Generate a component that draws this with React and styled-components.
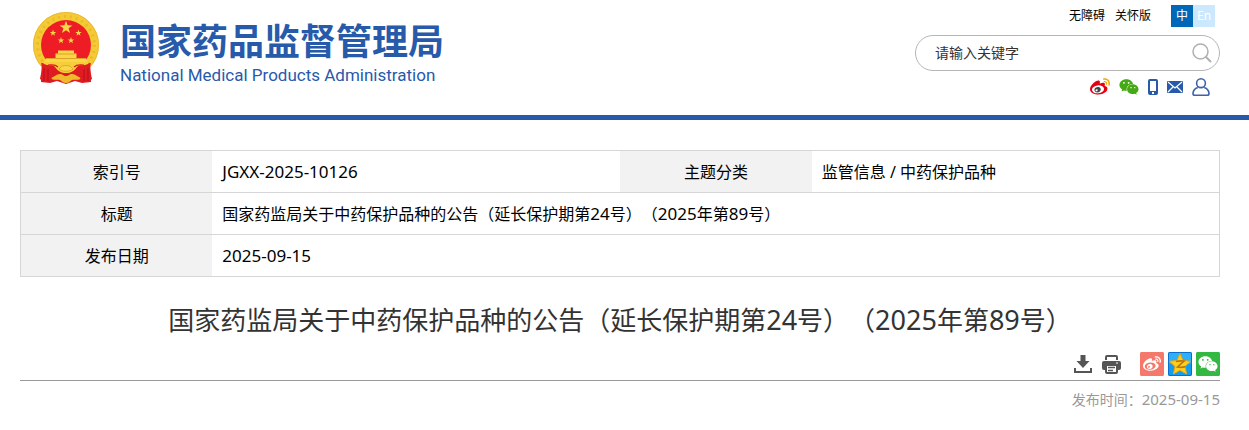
import React from "react";
import styled, { createGlobalStyle } from "styled-components";
import { FaWeixin } from "react-icons/fa";

const colors = {
  brand: "#285aaa",
  line: "#d6d6d6",
  label: "#f2f2f2",
  text: "#333333",
  muted: "#999999",
};

const star = (cx, cy, r) =>
  Array.from({ length: 10 }, (_, i) => {
    const radius = i % 2 ? r * 0.4 : r;
    const angle = (Math.PI / 5) * i - Math.PI / 2;
    return `${(cx + radius * Math.cos(angle)).toFixed(2)},${(
      cy +
      radius * Math.sin(angle)
    ).toFixed(2)}`;
  }).join(" ");

const Emblem = () => (
  <svg width="66" height="72" viewBox="0 0 66 72" aria-hidden="true">
    <circle cx="33" cy="33" r="33" fill="#f5cb35" />
    <circle
      cx="33"
      cy="33"
      r="28.5"
      fill="none"
      stroke="#e3a81f"
      strokeWidth="3"
      strokeDasharray="2 4"
      opacity="0.5"
    />
    <circle cx="33" cy="33" r="32.5" fill="none" stroke="#e9b93a" />
    <circle cx="33" cy="33" r="25" fill="#ee1c25" />
    <g fill="#f8d648">
      <polygon points={star(33, 15.5, 6.8)} />
      <polygon points={star(20, 21, 3.4)} />
      <polygon points={star(45.5, 21, 3.4)} />
      <polygon points={star(28, 28.5, 3.4)} />
      <polygon points={star(38, 28.5, 3.4)} />
      <path d="M25 38.5h16v3h2.5v4.5H53l2 4.5H11L13 46h9.5v-4.5H25z" />
    </g>
    <path d="M24 42h18M13 46.5h40" stroke="#dda226" />
    <path d="M9 51h48l1 19-9 1-7-2-9 3-9-3-7 2-9-1z" fill="#e01a22" />
    <path
      d="M11 50h44l1 3c-5 1-9-1-12 2-3 4-6 6-11 6s-8-2-11-6c-3-3-7-1-12-2z"
      fill="#f6ce39"
    />
    <path d="M15 53c5 0 7-1 10 2M51 53c-5 0-7-1-10 2" fill="none" stroke="#e01a22" strokeWidth="1.2" />
    <path
      d="M28 55c1-2 9-2 10 0l2 2c-2 3-12 3-14 0z"
      fill="#f8d648"
      stroke="#dc9c22"
      strokeWidth="0.8"
    />
    <path
      d="M17 66c5-1 6-4 10-4 3 0 3 2 6 2s3-2 6-2c4 0 5 3 10 4-4 3-7 1-10 2-2 1-3 3-6 3s-4-2-6-3c-3-1-6 1-10-2z"
      fill="#efb92c"
    />
    <path d="M8 51c2 5 0 10-1 16l4 3 7-1c2-5 1-11-1-15zM58 51c-2 5 0 10 1 16l-4 3-7-1c-2-5-1-11 1-15z" fill="#e21b23" />
    <path d="M11 56v13M15 57v12M51 57v12M55 56v13" stroke="#b01019" />
  </svg>
);

const WeiboIcon = ({ size, body, eye, wave }) => (
  <svg width={size} height={size} viewBox="0 0 512 512" aria-hidden="true">
    <path
      fill={body}
      d="M214.8 446.7C108.5 446.7 0 395.3 0 310.4c0-44.3 28-95.4 76.3-143.7C176 67 279.5 65.8 249.9 161c-4 13.1 12.3 5.7 12.3 6 79.5-33.6 140.5-16.8 114 51.4-3.7 9.4 1.1 10.9 8.3 13.1 135.7 42.3 34.8 215.2-169.7 215.2zm143.7-146.3c-5.4-55.7-78.5-94-163.4-85.7-84.8 8.6-148.8 60.3-143.4 116s78.5 94 163.4 85.7c84.8-8.6 148.8-60.3 143.4-116z"
    />
    <path
      fill={wave}
      d="M407 177.6c7.6-24-13.4-46.8-37.4-41.7-22 4.8-28.8-28.1-7.1-32.8 50.1-10.9 92.3 37.1 76.5 84.8-6.8 21.2-38.8 10.8-32-10.3zM347.9 35.1c-25.9 5.6-16.8 43.7 8.3 38.3 72.3-15.2 134.8 52.8 111.7 124-7.4 24.2 29.1 37 37.4 12 31.9-99.8-55.1-195.9-157.4-174.3z"
    />
    <path
      fill={eye}
      d="M269.4 346.1c-17.1 38.8-66.8 60-109.1 46.3-40.8-13.1-58-53.4-40.3-89.7 17.7-35.4 63.1-55.4 103.4-45.1 42 10.8 63.1 50.2 46 88.5zm-86.3-30c-12.9-5.4-30 .3-38 12.9-8.3 12.9-4.3 28 8.6 34 13.1 6 30.8.3 39.1-12.9 8-13.1 3.7-28.3-9.7-34z"
    />
  </svg>
);

const PhoneIcon = () => (
  <svg width="10" height="16" viewBox="0 0 10 16" aria-hidden="true">
    <rect width="10" height="16" rx="2" fill={colors.brand} />
    <rect x="2" y="2" width="6" height="10" fill="#fff" />
    <rect x="4" y="13" width="2" height="2" fill="#fff" />
  </svg>
);

const MailIcon = () => (
  <svg width="16" height="12" viewBox="0 0 16 12" aria-hidden="true">
    <rect width="16" height="12" rx="1" fill={colors.brand} />
    <path d="M1 1l7 6 7-6M1 11l5-5M15 11l-5-5" fill="none" stroke="#fff" strokeWidth="1.2" />
  </svg>
);

const UserIcon = () => (
  <svg width="18" height="18" viewBox="0 0 18 18" aria-hidden="true">
    <g fill="none" stroke="#3f60ad" strokeWidth="1.6">
      <circle cx="9" cy="5.2" r="4.4" />
      <path d="M5.8 9.4C3 10.3 1.2 12.6 1 15.4c0 1.2.6 1.8 1.8 1.8h12.4c1.2 0 1.8-.6 1.8-1.8-.2-2.8-2-5.1-4.8-6" />
    </g>
  </svg>
);

const SearchIcon = () => (
  <svg width="20" height="20" viewBox="0 0 20 20" aria-hidden="true">
    <g fill="none" stroke="#b0b0b0" strokeWidth="1.5">
      <circle cx="8.5" cy="8.5" r="7.5" />
      <path d="M13.5 13.5l5.5 5.5" strokeWidth="2" />
    </g>
  </svg>
);

const DownloadIcon = () => (
  <svg width="18" height="18" viewBox="0 0 18 18" aria-hidden="true">
    <path d="M6.5 0h5v6h4L9 13 2.5 6h4z" fill="#555" />
    <path d="M1 13v4h16v-4" fill="none" stroke="#555" strokeWidth="2" />
  </svg>
);

const PrintIcon = () => (
  <svg width="19" height="19" viewBox="0 0 19 19" aria-hidden="true">
    <path d="M4 5V2q0-1 1-1h9q1 0 1 1v3" fill="none" stroke="#555" strokeWidth="2" />
    <path d="M2 6h15q2 0 2 2v5q0 2-2 2H2q-2 0-2-2V8q0-2 2-2z" fill="#555" />
    <path d="M4 10h11v7q0 1-1 1H5q-1 0-1-1z" fill="#fff" stroke="#555" strokeWidth="2" />
    <path d="M6 12.5h7M6 15.5h5" stroke="#555" strokeWidth="1.3" />
    <path d="M14 8h2" stroke="#fff" />
  </svg>
);

const QzoneIcon = () => (
  <svg width="24" height="24" viewBox="0 0 24 24" aria-hidden="true">
    <rect x="1" y="1" width="22" height="11" rx="1" fill="#2cb0fa" />
    <polygon
      points="12,1.5 15,8.5 22.5,9.3 17,14.5 18.6,22 12,18.3 5.4,22 7,14.5 1.5,9.3 9,8.5"
      fill="#ffcf1a"
      stroke="#f0a30c"
      strokeLinejoin="round"
    />
    <path d="M8 9.5q4-1 8-.5l-6.5 6q4 .8 8-.4" fill="none" stroke="#b87714" strokeWidth="1.7" />
  </svg>
);

const Num = ({ size, children }) => <Figures $size={size}>{children}</Figures>;

const Title = ({ size }) => (
  <>
    国家药监局关于中药保护品种的公告（延长保护期第<Num size={size}>24</Num>
    号）（<Num size={size}>2025</Num>年第<Num size={size}>89</Num>号）
  </>
);

const facts = [
  [
    { label: "索引号", value: <Num size={17}>JGXX-2025-10126</Num> },
    { label: "主题分类", value: "监管信息 / 中药保护品种" },
  ],
  [{ label: "标题", value: <Title size={17} /> }],
  [{ label: "发布日期", value: <Num size={17}>2025-09-15</Num> }],
];

const App = () => (
  <>
    <GlobalStyle />
    <Header>
      <Logo href="#">
        <Emblem />
        <LogoText>
          <LogoName>国家药品监督管理局</LogoName>
          <LogoLatin>National Medical Products Administration</LogoLatin>
        </LogoText>
      </Logo>
      <Tools>
        <TopLinks>
          <TopLink href="#">无障碍</TopLink>
          <TopLink href="#">关怀版</TopLink>
          <Languages>
            <Language href="#" $active>
              中
            </Language>
            <Language href="#">En</Language>
          </Languages>
        </TopLinks>
        <Search onSubmit={(e) => e.preventDefault()}>
          <SearchInput type="text" aria-label="请输入关键字" placeholder="请输入关键字" />
          <IconButton type="submit" aria-label="搜索">
            <SearchIcon />
          </IconButton>
        </Search>
        <Channels>
          <IconLink href="#" aria-label="微博">
            <WeiboIcon size={20} body="#e60012" eye="#444" wave="#f0a800" />
          </IconLink>
          <IconLink href="#" aria-label="微信">
            <FaWeixin size={20} color="#45a815" />
          </IconLink>
          <IconLink href="#" aria-label="手机">
            <PhoneIcon />
          </IconLink>
          <IconLink href="#" aria-label="邮箱">
            <MailIcon />
          </IconLink>
          <IconLink href="#" aria-label="用户">
            <UserIcon />
          </IconLink>
        </Channels>
      </Tools>
    </Header>
    <Main>
      <Facts>
        <colgroup>
          <Col $width="16%" />
          <Col $width="34%" />
          <Col $width="16%" />
          <Col $width="34%" />
        </colgroup>
        <tbody>
          {facts.map((row) => (
            <FactRow key={row[0].label}>
              {row.map(({ label, value }) => (
                <React.Fragment key={label}>
                  <Label scope="row">{label}</Label>
                  <Value colSpan={row.length === 1 ? 3 : 1}>{value}</Value>
                </React.Fragment>
              ))}
            </FactRow>
          ))}
        </tbody>
      </Facts>
      <Heading>
        <Title size={27} />
      </Heading>
      <Actions>
        <IconButton type="button" aria-label="下载">
          <DownloadIcon />
        </IconButton>
        <IconButton type="button" aria-label="打印">
          <PrintIcon />
        </IconButton>
        <ShareList>
          <Share href="#" aria-label="分享到微博" $color="#f4796b">
            <WeiboIcon size={18} body="#fff" eye="#fff" wave="#fff" />
          </Share>
          <Share href="#" aria-label="分享到QQ空间" $color="#119cf0" $edge="#0870cc">
            <QzoneIcon />
          </Share>
          <Share href="#" aria-label="分享到微信" $color="#33b942">
            <FaWeixin size={20} color="#fff" />
          </Share>
        </ShareList>
      </Actions>
      <Published>
        发布时间：<Num size={15}>2025-09-15</Num>
      </Published>
    </Main>
  </>
);

export default App;

const GlobalStyle = createGlobalStyle`
  * {
    box-sizing: border-box;
  }
  body {
    margin: 0;
    background: #fff;
    color: #000;
    font-family: "Noto Sans", "Noto Sans CJK SC", sans-serif;
    text-spacing-trim: space-all;
  }
  a {
    color: inherit;
    text-decoration: none;
  }
`;

const Figures = styled.span`
  font-size: ${({ $size }) => $size}px;
`;

const Header = styled.header`
  display: flex;
  justify-content: space-between;
  padding: 5px 29px 18px 33px;
  border-bottom: 5px solid ${colors.brand};
`;

const Logo = styled.a`
  display: flex;
  gap: 21px;
  padding-top: 7px;
  color: ${colors.brand};
`;

const LogoText = styled.span`
  display: flex;
  flex-direction: column;
  gap: 3px;
  padding-top: 6px;
  white-space: nowrap;
`;

const LogoName = styled.span`
  font: bold 36px/42px "Noto Sans CJK SC", sans-serif;
`;

const LogoLatin = styled.span`
  font: 17px/24px Roboto, sans-serif;
`;

const Tools = styled.div`
  width: 305px;
`;

const TopLinks = styled.nav`
  display: flex;
  align-items: center;
  justify-content: flex-end;
  gap: 10px;
  padding-right: 5px;
  font-size: 12px;
  line-height: 22px;
`;

const TopLink = styled.a`
  color: #000;
`;

const Languages = styled.div`
  display: flex;
  margin-left: 10px;
`;

const Language = styled.a`
  width: 22px;
  color: #fff;
  text-align: center;
  background: ${({ $active }) => ($active ? "#0068b7" : "#cce8ff")};
`;

const Search = styled.form`
  display: flex;
  align-items: center;
  height: 36px;
  margin-top: 8px;
  padding: 0 7px 0 19px;
  border: 1px solid #b5b5b5;
  border-radius: 18px;
`;

const SearchInput = styled.input`
  flex: 1;
  min-width: 0;
  padding: 0;
  border: none;
  outline: none;
  background: none;
  font: 14px/20px "Noto Sans", "Noto Sans CJK SC", sans-serif;

  &::placeholder {
    color: ${colors.text};
    opacity: 1;
  }
`;

const IconButton = styled.button`
  display: flex;
  padding: 0;
  border: none;
  background: none;
  cursor: pointer;
`;

const Channels = styled.div`
  display: flex;
  align-items: center;
  justify-content: flex-end;
  gap: 9px;
  padding: 6px 10px 0 0;
`;

const IconLink = styled.a`
  display: flex;
`;

const Main = styled.main`
  padding: 30px 29px 20px 20px;
`;

const Facts = styled.table`
  width: 100%;
  table-layout: fixed;
  border-collapse: collapse;
  border: 1px solid ${colors.line};
  font-size: 16px;
  line-height: 24px;
`;

const Col = styled.col`
  width: ${({ $width }) => $width};
`;

const FactRow = styled.tr`
  height: 42px;
  border-bottom: 1px solid ${colors.line};
`;

const Label = styled.th`
  padding: 0;
  background: ${colors.label};
  font-weight: normal;
`;

const Value = styled.td`
  padding: 0 10px;
`;

const Heading = styled.h1`
  margin: 23px 0 0;
  color: ${colors.text};
  font-size: 26px;
  font-weight: normal;
  line-height: 40px;
  text-align: center;
`;

const Actions = styled.div`
  display: flex;
  align-items: center;
  justify-content: flex-end;
  gap: 10px;
  margin-top: 12px;
  padding-bottom: 4px;
  border-bottom: 1px solid ${colors.muted};
`;

const ShareList = styled.div`
  display: flex;
  gap: 4px;
  margin-left: 9px;
`;

const Share = styled.a`
  display: flex;
  align-items: center;
  justify-content: center;
  width: 24px;
  height: 24px;
  border-radius: 2px;
  background: ${({ $color }) => $color};
  box-shadow: inset 0 0 0 1px ${({ $edge, $color }) => $edge || $color};
`;

const Published = styled.p`
  margin: 7px 0 0;
  color: ${colors.muted};
  font-size: 14px;
  line-height: 22px;
  text-align: right;
`;
